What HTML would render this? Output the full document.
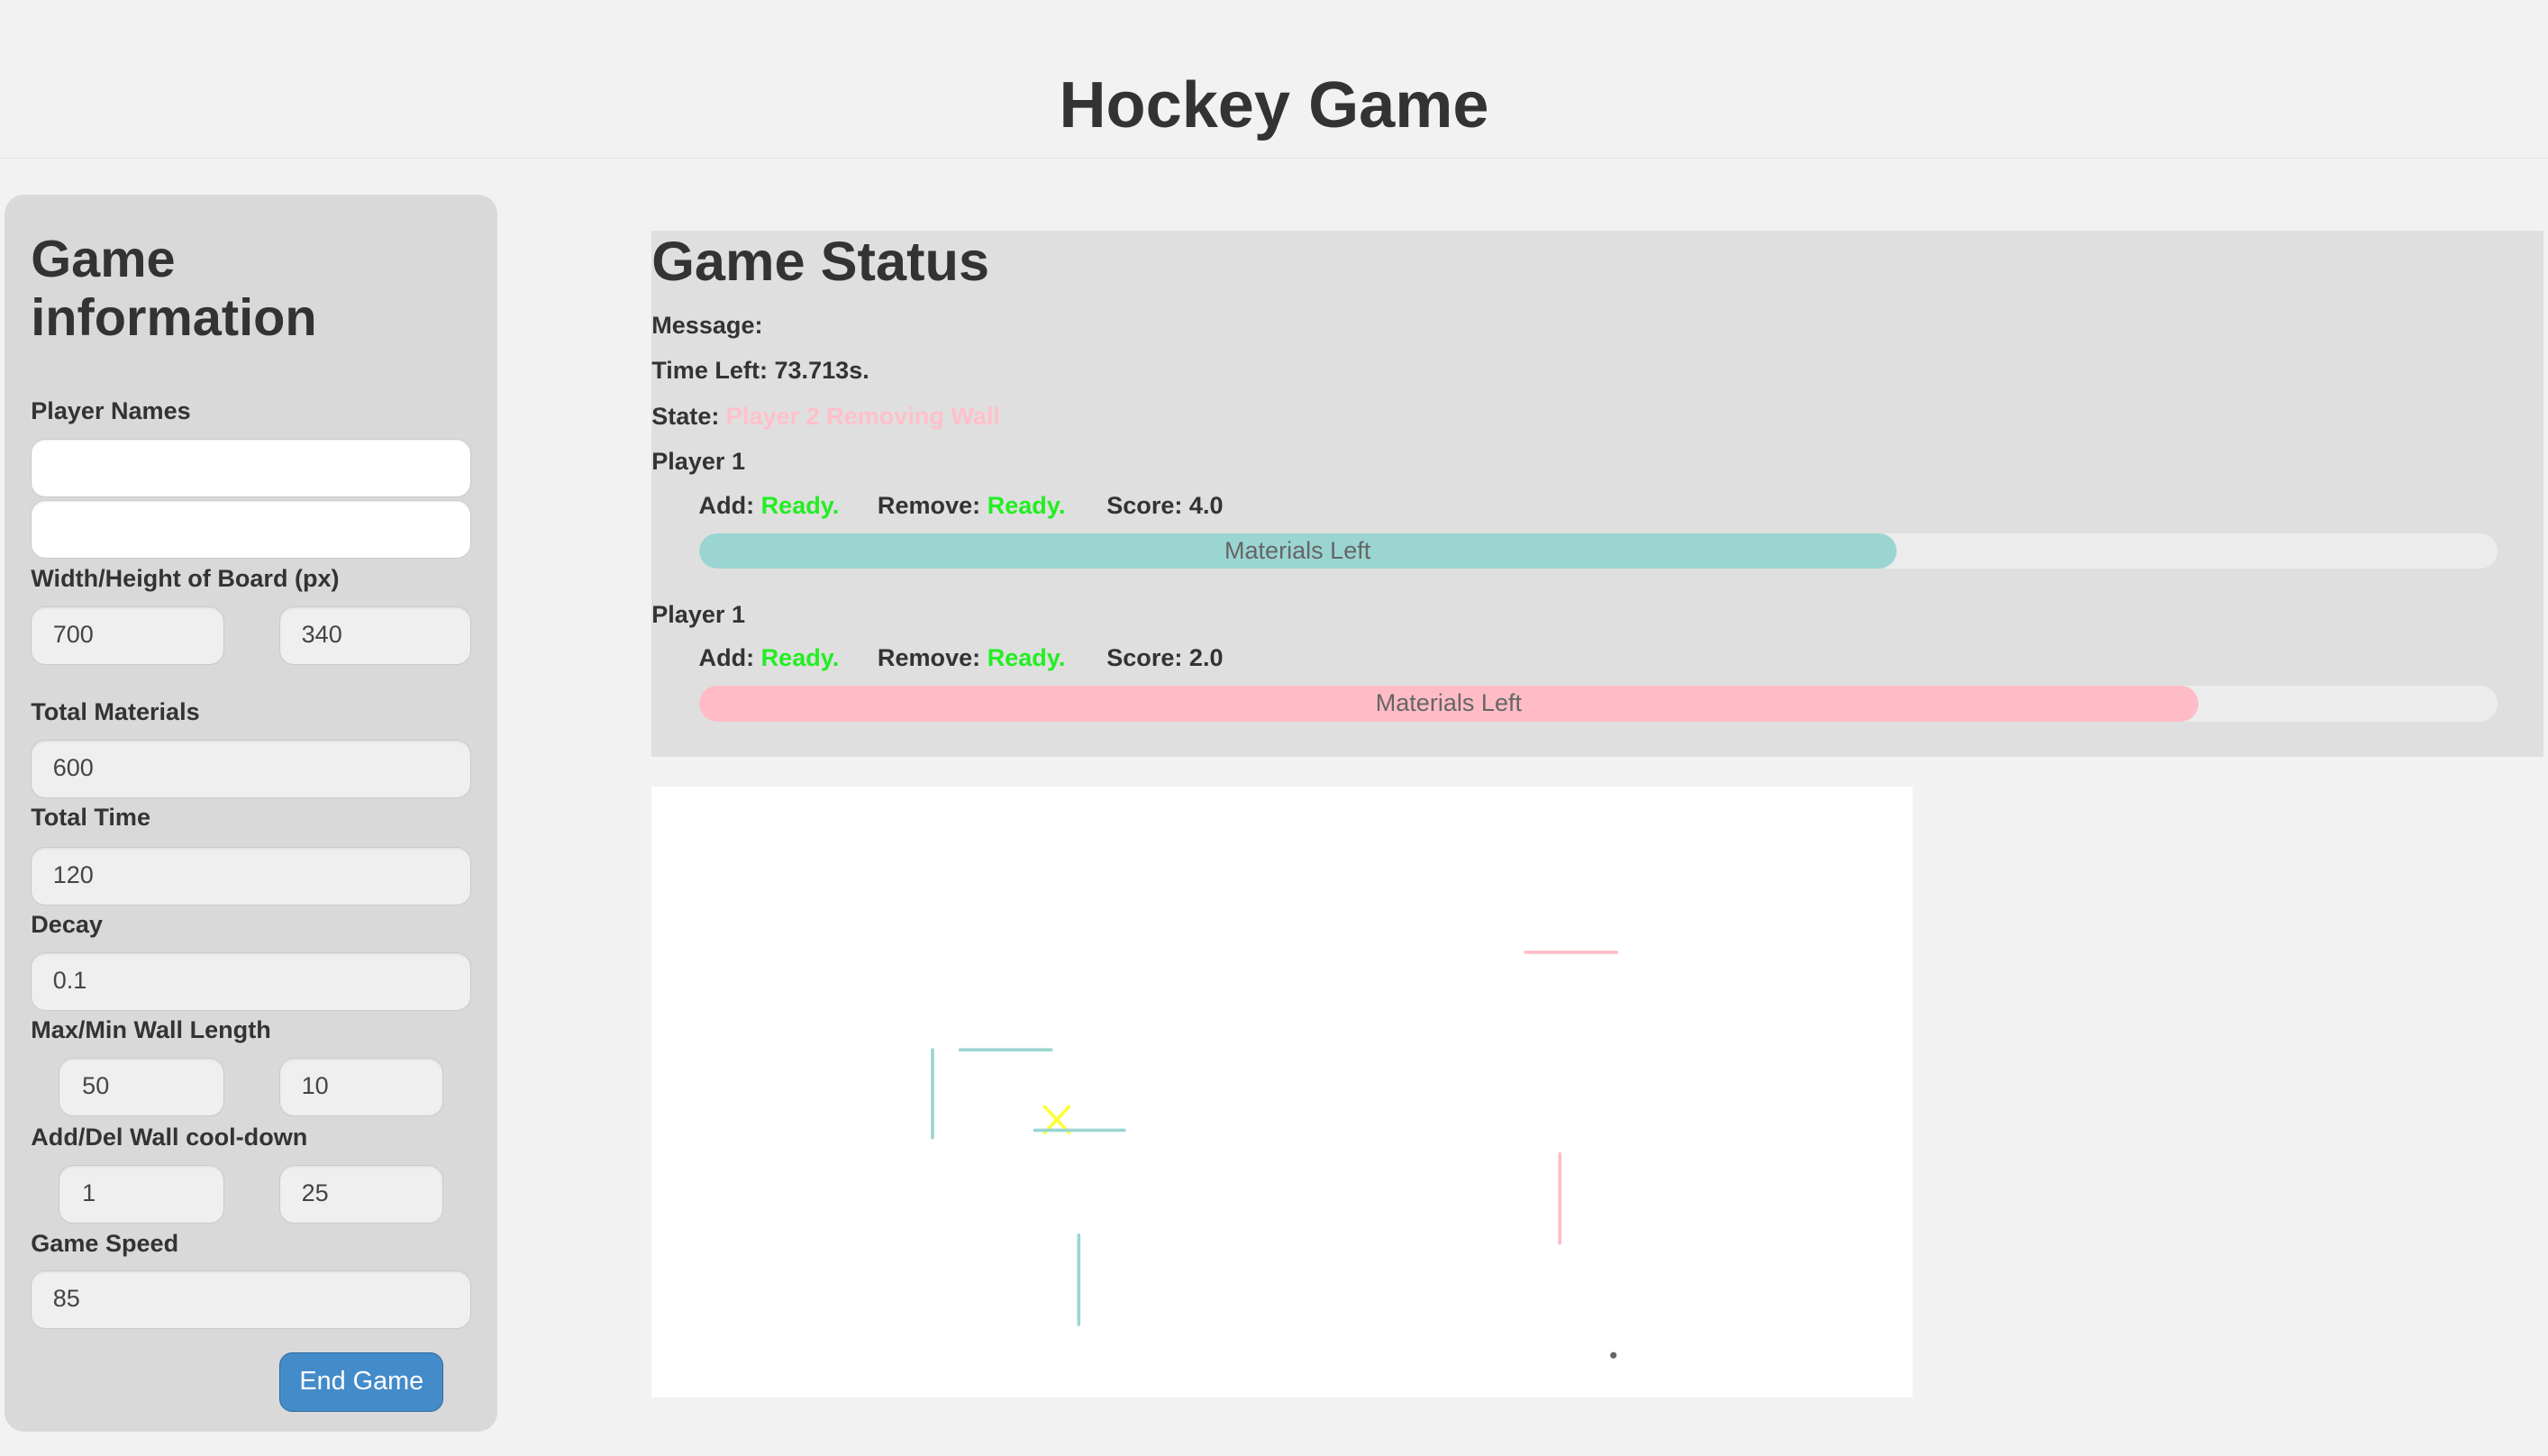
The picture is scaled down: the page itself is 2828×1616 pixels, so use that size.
<!DOCTYPE html>
<html><head><meta charset="utf-8"><style>
html,body{margin:0;padding:0;background:#f2f2f2;overflow:hidden}
#w{position:absolute;left:0;top:0;width:1568px;height:896px;zoom:1.80357;font-family:"Liberation Sans",sans-serif;color:#333}
.a{position:absolute}
.lb{position:absolute;left:19px;font-weight:bold;font-size:15px;line-height:18px;transform:translateY(-9px);white-space:nowrap}
.in{position:absolute;box-sizing:border-box;height:36px;border:1px solid #cacaca;border-radius:9px;background:#efefef;font-size:15px;line-height:34px;padding-left:13px;color:#444;box-shadow:inset 0 1px 1px rgba(0,0,0,.05)}
.t{position:absolute;left:401px;font-weight:bold;font-size:15px;line-height:18px;transform:translateY(-9px);white-space:nowrap}
.g{color:#22ee22}
.bar{position:absolute;left:430px;width:1107px;height:22px;border-radius:11px;background:#ececec;overflow:hidden}
.fill{position:absolute;left:0;top:0;height:22px;border-radius:11px;text-align:center;font-size:15px;line-height:22px;color:#666}
</style></head><body><div id="w">
<div class="a" style="left:0;top:0;width:1568px;height:97px;border-bottom:1px solid #e6e6e6"></div>
<div class="a" style="left:0;width:1568px;top:42px;text-align:center;font-size:40px;font-weight:bold;line-height:46px">Hockey Game</div>

<div class="a" style="left:3px;top:120px;width:303px;height:761px;background:#d9d9d9;border-radius:12px"></div>
<div class="a" style="left:19px;top:142px;font-size:32px;line-height:36px;font-weight:bold">Game<br>information</div>
<div class="lb" style="top:253px">Player Names</div>
<div class="in" style="left:19px;top:270px;width:271px;background:#fff"></div>
<div class="in" style="left:19px;top:308px;width:271px;background:#fff"></div>
<div class="lb" style="top:356px">Width/Height of Board (px)</div>
<div class="in" style="left:19px;top:373px;width:119px">700</div>
<div class="in" style="left:172px;top:373px;width:118px">340</div>
<div class="lb" style="top:438px">Total Materials</div>
<div class="in" style="left:19px;top:455px;width:271px">600</div>
<div class="lb" style="top:503px">Total Time</div>
<div class="in" style="left:19px;top:521px;width:271px">120</div>
<div class="lb" style="top:569px">Decay</div>
<div class="in" style="left:19px;top:586px;width:271px">0.1</div>
<div class="lb" style="top:634px">Max/Min Wall Length</div>
<div class="in" style="left:36px;top:651px;width:102px;padding-left:14px">50</div>
<div class="in" style="left:172px;top:651px;width:101px">10</div>
<div class="lb" style="top:700px">Add/Del Wall cool-down</div>
<div class="in" style="left:36px;top:717px;width:102px;padding-left:14px">1</div>
<div class="in" style="left:172px;top:717px;width:101px">25</div>
<div class="lb" style="top:765px">Game Speed</div>
<div class="in" style="left:19px;top:782px;width:271px">85</div>
<div class="a" style="left:172px;top:832px;width:101px;height:37px;box-sizing:border-box;background:#448bc9;border:1px solid #2f6a9c;border-radius:8px;color:#fff;font-size:16px;line-height:35px;text-align:center">End Game</div>

<div class="a" style="left:401px;top:142px;width:1164px;height:324px;background:#dfdfdf"></div>
<div class="a" style="left:401px;top:141px;font-size:34px;line-height:40px;font-weight:bold">Game Status</div>
<div class="t" style="top:200px">Message:</div>
<div class="t" style="top:228px">Time Left: 73.713s.</div>
<div class="t" style="top:256px">State: <span style="color:#ffc0cb">Player 2 Removing Wall</span></div>
<div class="t" style="top:284px">Player 1</div>
<div class="t" style="top:311px;left:430px">Add: <span class="g">Ready.</span></div>
<div class="t" style="top:311px;left:540px">Remove: <span class="g">Ready.</span></div>
<div class="t" style="top:311px;left:681px">Score: 4.0</div>
<div class="bar" style="top:328px"><div class="fill" style="width:737px;background:#9ad5d1">Materials Left</div></div>
<div class="t" style="top:378px">Player 1</div>
<div class="t" style="top:405px;left:430px">Add: <span class="g">Ready.</span></div>
<div class="t" style="top:405px;left:540px">Remove: <span class="g">Ready.</span></div>
<div class="t" style="top:405px;left:681px">Score: 2.0</div>
<div class="bar" style="top:422px"><div class="fill" style="width:923px;background:#ffbcc6">Materials Left</div></div>

<svg class="a" style="left:401px;top:484px" width="776" height="376" viewBox="401 484 776 376">
<rect x="401" y="484" width="776" height="376" fill="#fff"/>
<g stroke-linecap="round" stroke-width="2" fill="none">
<line x1="574" y1="646" x2="574" y2="700" stroke="#9ad5d1"/>
<line x1="591" y1="646" x2="647" y2="646" stroke="#9ad5d1"/>
<line x1="643" y1="681" x2="658" y2="697" stroke="#ffff33"/>
<line x1="658" y1="681" x2="643" y2="697" stroke="#ffff33"/>
<line x1="637" y1="695.5" x2="692" y2="695.5" stroke="#9ad5d1"/>
<line x1="664" y1="760" x2="664" y2="815" stroke="#9ad5d1"/>
<line x1="939" y1="586" x2="995" y2="586" stroke="#ffbcc6"/>
<line x1="960" y1="710" x2="960" y2="765" stroke="#ffbcc6"/>
</g>
<circle cx="993" cy="834" r="2" fill="#666"/>
</svg>
</div></body></html>
